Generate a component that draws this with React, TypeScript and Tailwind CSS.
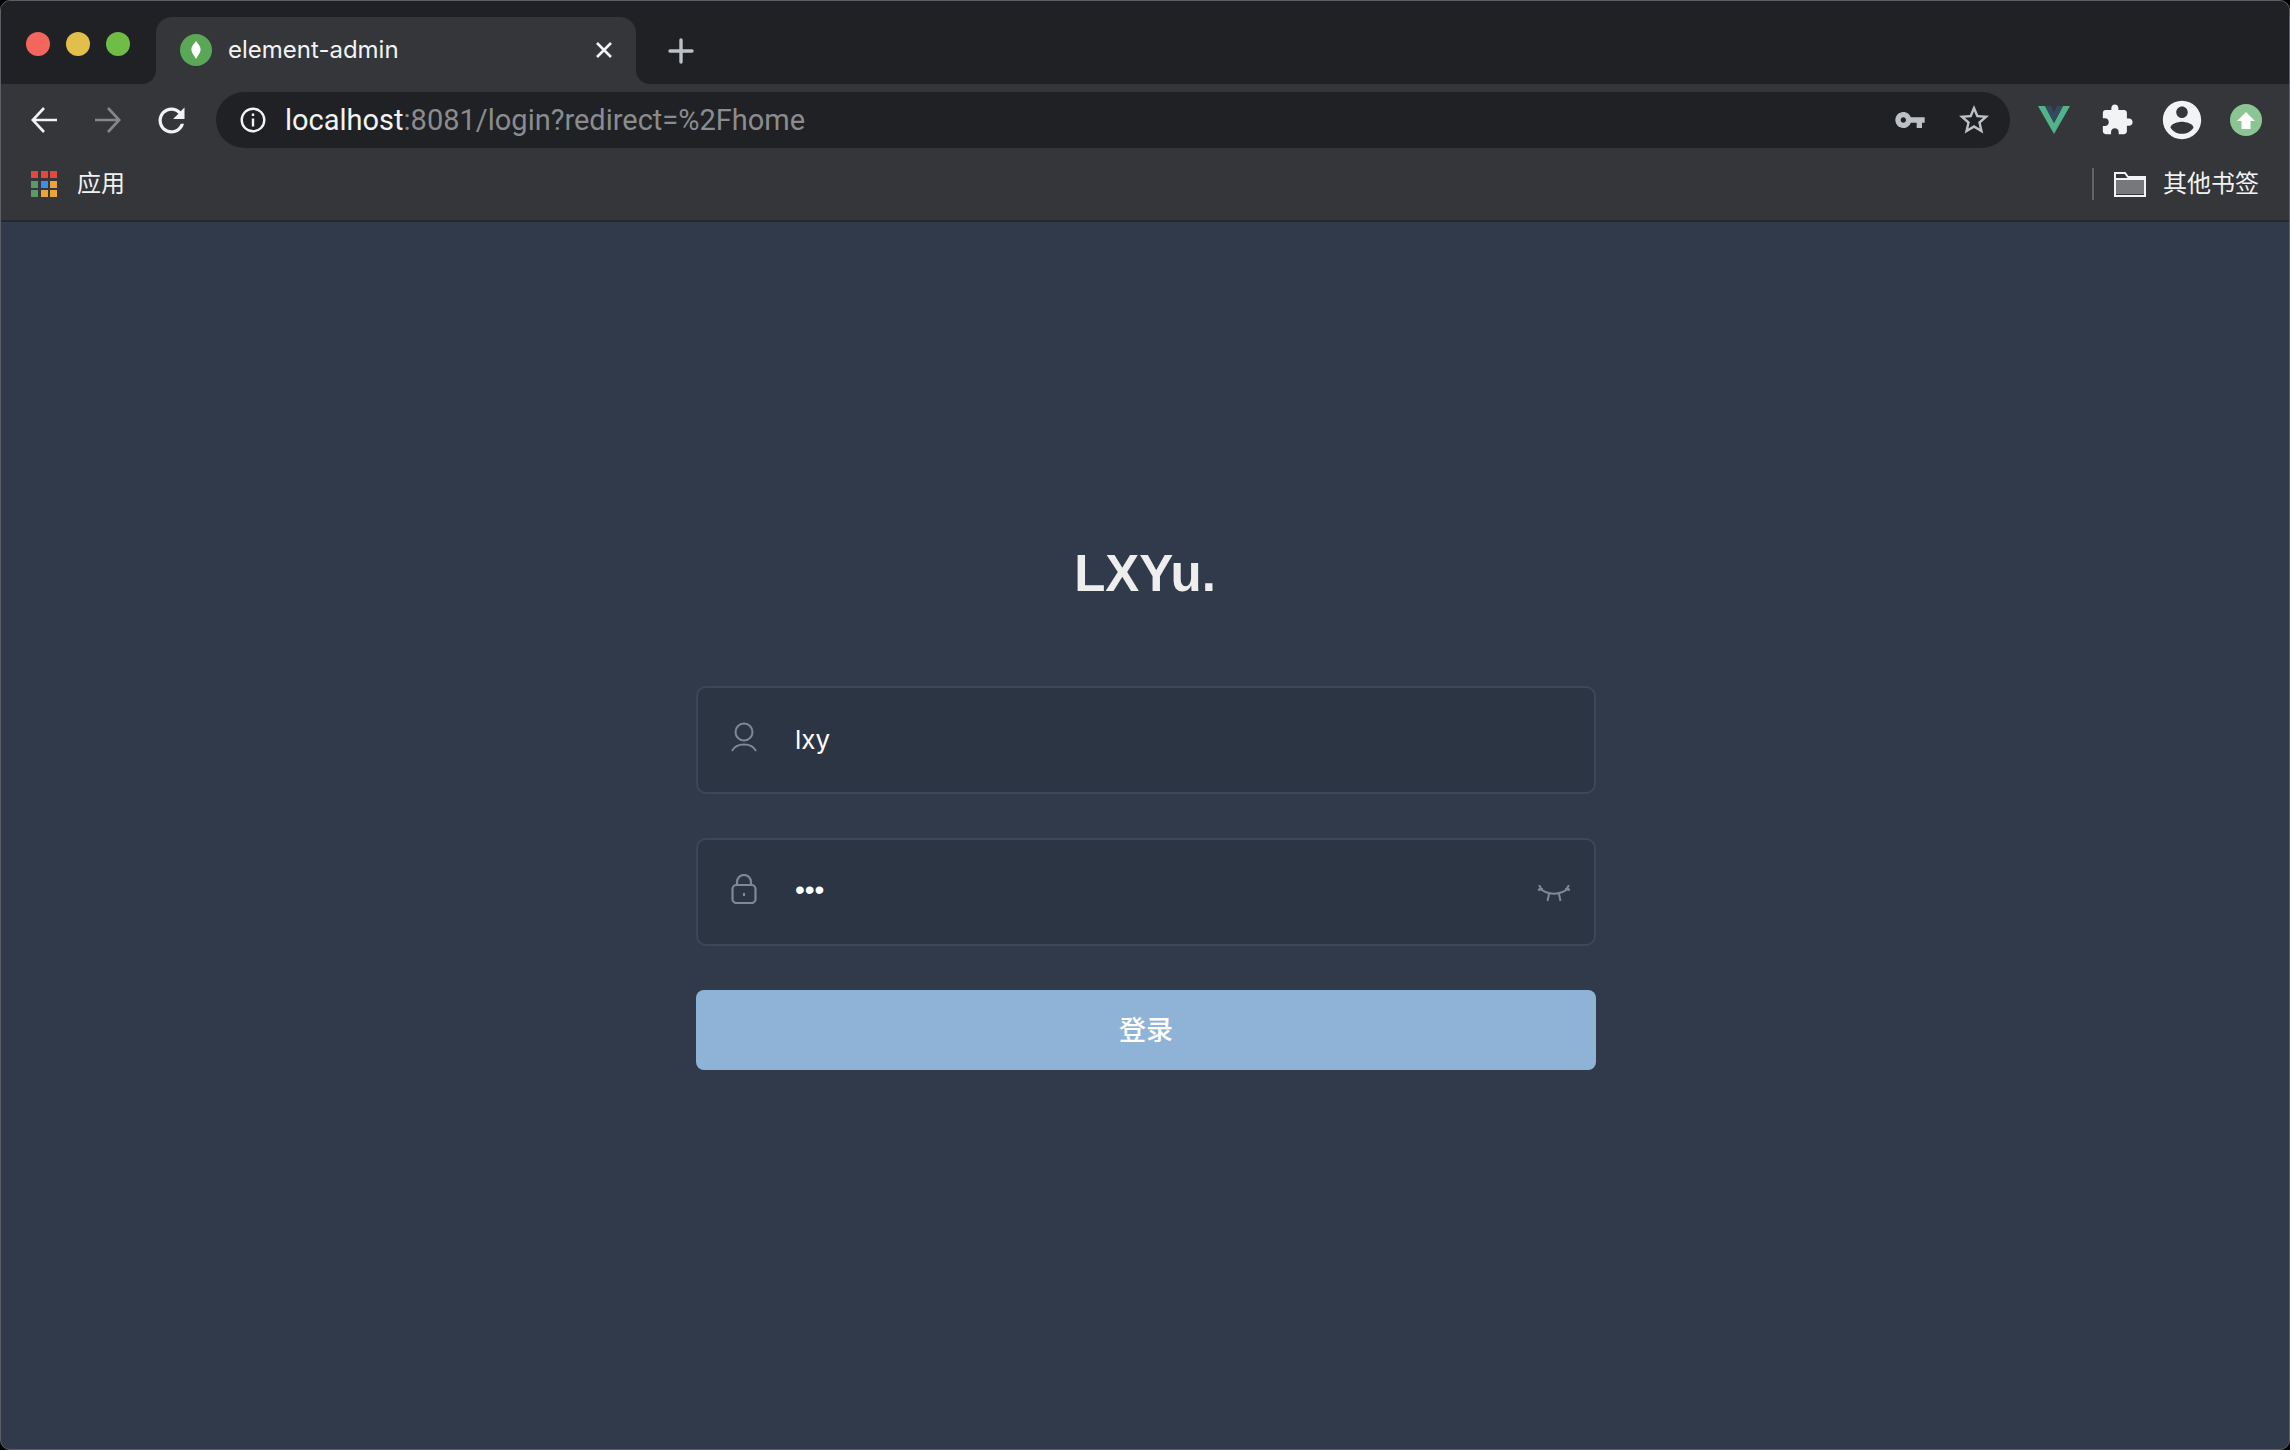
import React from "react";

const sans = "font-['Inter','Noto_Sans_CJK_SC',sans-serif]";

const appColors = [
  "bg-[#e2483d]", "bg-[#e2483d]", "bg-[#e2483d]",
  "bg-[#5a9a68]", "bg-[#3f8cf0]", "bg-[#eaa53a]",
  "bg-[#5a9a68]", "bg-[#eaa53a]", "bg-[#eaa53a]",
];

function TrafficLights() {
  return (
    <div className="flex h-[67px] w-[155px] items-center gap-4 pb-[14px] pl-[25px]">
      <div className="h-6 w-6 rounded-full bg-[#f2665e]" />
      <div className="h-6 w-6 rounded-full bg-[#e2bf4a]" />
      <div className="h-6 w-6 rounded-full bg-[#6fbd45]" />
    </div>
  );
}

function Tab() {
  return (
    <div className="relative flex h-[67px] w-[480px] items-center rounded-t-[16px] bg-[#35363a] pb-[2px] pl-6 pr-[23px]">
      <div className="absolute bottom-0 left-[-14px] h-[14px] w-[14px] bg-[#35363a]">
        <div className="h-full w-full rounded-br-[14px] bg-[#202124]" />
      </div>
      <div className="absolute bottom-0 right-[-14px] h-[14px] w-[14px] bg-[#35363a]">
        <div className="h-full w-full rounded-bl-[14px] bg-[#202124]" />
      </div>
      <div className="flex h-8 w-8 items-center justify-center rounded-full bg-[#5aa857]">
        <svg width="10" height="18" viewBox="0 0 10 18">
          <path d="M5 0C8 4 10 6 9.5 9.5 9 12.500 7 14.500 5 18 3 14.500 1 12.500.5 9.500 0 6 2 4 5 0Z" fill="#fff" />
        </svg>
      </div>
      <span className={`ml-4 flex-1 text-[24px] leading-none text-[#f1f3f4] ${sans}`}>element-admin</span>
      <svg width="18" height="18" viewBox="0 0 18 18" fill="none" stroke="#f1f3f4" strokeWidth="2.6">
        <path d="M2 2l14 14M16 2 2 16" />
      </svg>
    </div>
  );
}

function NavIcons() {
  return (
    <div className="flex h-full w-[215px] items-center pl-[30px]">
      <svg width="26" height="26" viewBox="0 0 26 26" fill="none" stroke="#f1f3f4" strokeWidth="2.6">
        <path d="M26 13H2M13 1 1.800 13 13 25" />
      </svg>
      <svg className="ml-[38px]" width="26" height="26" viewBox="0 0 26 26" fill="none" stroke="#85878a" strokeWidth="2.6">
        <path d="M0 13h24M13 1l11.200 12L13 25" />
      </svg>
      <svg className="ml-[31px]" width="39" height="39" viewBox="0 0 24 24" fill="#f1f3f4">
        <path d="M17.65 6.35C16.2 4.9 14.21 4 12 4c-4.42 0-7.99 3.58-7.99 8s3.57 8 7.99 8c3.73 0 6.84-2.55 7.73-6h-2.08c-.82 2.33-3.04 4-5.65 4-3.31 0-6-2.69-6-6s2.69-6 6-6c1.66 0 3.14.69 4.22 1.78L13 11h7V4l-2.35 2.35z" />
      </svg>
    </div>
  );
}

function AddressBar() {
  return (
    <div className="flex h-14 w-[1794px] items-center rounded-full bg-[#202124] pl-6 pr-[18px]">
      <svg width="26" height="26" viewBox="0 0 26 26" fill="none" stroke="#f1f3f4" strokeWidth="2.4">
        <circle cx="13" cy="13" r="11.3" />
        <path d="M13 11.500v8M13 6.500v2.600" />
      </svg>
      <span className="ml-[19px] flex-1 font-['Roboto',sans-serif] text-[29px] leading-none text-[#8a8c8f]">
        <span className="text-[#f1f3f4]">localhost</span>:8081/login?redirect=%2Fhome
      </span>
      <svg className="mr-[30px]" width="32" height="32" viewBox="0 0 24 24" fill="#bdc1c6">
        <path d="M12.65 10C11.83 7.67 9.61 6 7 6c-3.31 0-6 2.69-6 6s2.69 6 6 6c2.61 0 4.83-1.67 5.65-4H17v4h4v-4h2v-4H12.65zM7 14c-1.1 0-2-.9-2-2s.9-2 2-2 2 .9 2 2-.9 2-2 2z" />
      </svg>
      <svg width="36" height="36" viewBox="0 0 24 24" fill="#bdc1c6">
        <path d="M22 9.24l-7.19-.62L12 2 9.19 8.63 2 9.24l5.46 4.73L5.82 21 12 17.27 18.18 21l-1.63-7.03L22 9.24zM12 15.4l-3.76 2.27 1-4.28-3.32-2.88 4.38-.38L12 6.1l1.71 4.04 4.38.38-3.32 2.88 1 4.28L12 15.4z" />
      </svg>
    </div>
  );
}

function ExtensionIcons() {
  return (
    <div className="flex items-center">
      <svg className="ml-7" width="32" height="28" viewBox="0 0 32 28">
        <path d="M0 0h7l9 17L25 0h7L16 28Z" fill="#4fb48a" />
        <path d="M7 0h6l3 6 3-6h6l-9 17Z" fill="#34495e" />
      </svg>
      <svg className="ml-[30px]" width="34" height="34" viewBox="0 0 24 24" fill="#f1f3f4">
        <path d="M20.5 11H19V7c0-1.1-.9-2-2-2h-4V3.500C13 2.120 11.880 1 10.500 1S8 2.120 8 3.500V5H4c-1.100 0-1.990.9-1.990 2v3.800H3.500c1.490 0 2.700 1.210 2.700 2.700s-1.210 2.700-2.700 2.700H2V20c0 1.100.9 2 2 2h3.800v-1.500c0-1.490 1.210-2.700 2.700-2.700 1.490 0 2.700 1.210 2.700 2.700V22H17c1.100 0 2-.9 2-2v-4h1.500c1.380 0 2.500-1.120 2.500-2.500S21.880 11 20.500 11z" />
      </svg>
      <svg className="ml-[25px]" width="46" height="46" viewBox="0 0 24 24" fill="#f1f3f4">
        <path d="M12 2C6.480 2 2 6.480 2 12s4.480 10 10 10 10-4.480 10-10S17.520 2 12 2zm0 3c1.660 0 3 1.340 3 3s-1.340 3-3 3-3-1.340-3-3 1.340-3 3-3zm0 14.200c-2.500 0-4.710-1.280-6-3.220.03-1.990 4-3.080 6-3.080 1.990 0 5.970 1.090 6 3.080-1.290 1.940-3.500 3.220-6 3.220z" />
      </svg>
      <div className="ml-[25px] flex h-8 w-8 items-center justify-center rounded-full bg-[#8cc594]">
        <svg width="18" height="17" viewBox="0 0 18 17" fill="#fff">
          <path d="M9 0l9 9h-4.500v8h-9V9H0Z" />
        </svg>
      </div>
    </div>
  );
}

function Bookmarks() {
  return (
    <div className={`flex h-[64px] items-center justify-between pb-[8px] pl-[30px] pr-[30px] text-[24px] text-[#f1f3f4] ${sans}`}>
      <div className="flex items-center">
        <div className="grid w-[26px] grid-cols-3 gap-[2.5px]">
          {appColors.map((color, i) => (
            <div key={i} className={`h-[7px] w-[7px] ${color}`} />
          ))}
        </div>
        <span className="ml-5 leading-none">应用</span>
      </div>
      <div className="flex items-center">
        <div className="mr-[20px] h-8 w-[2px] bg-[#5f6368]" />
        <svg width="32" height="26" viewBox="0 0 32 26" fill="none">
          <path d="M2 9h28v14H2Z" fill="#77787b" />
          <path d="M1 24V2h10l3 4h17v19H1ZM1 8h30" stroke="#f1f3f4" strokeWidth="2" />
        </svg>
        <span className="ml-[17px] leading-none">其他书签</span>
      </div>
    </div>
  );
}

function Field({ icon, children, right }: { icon: React.ReactNode; children: React.ReactNode; right?: React.ReactNode }) {
  return (
    <div className="flex h-[108px] items-center rounded-[10px] border-2 border-[#3d4757] bg-[#2c3543] pb-[1px] pl-[33px] pr-[23px]">
      <div className="flex w-[64px] items-center pb-[5px]">{icon}</div>
      <div className={`flex-1 leading-none text-white ${sans}`}>{children}</div>
      {right}
    </div>
  );
}

export default function App() {
  return (
    <div className="bg-black">
      <div className="flex h-[1450px] w-[2290px] flex-col overflow-hidden rounded-[10px] border border-[#5b5f66] bg-[#303a4b]">
        <div className="flex h-[83px] shrink-0 items-end bg-[#202124]">
          <TrafficLights />
          <Tab />
          <svg className="mb-[20px] ml-[32px]" width="26" height="26" viewBox="0 0 26 26" fill="none" stroke="#bdc1c6" strokeWidth="3.4" strokeLinecap="round">
            <path d="M13 2v22M2 13h22" />
          </svg>
        </div>
        <div className="shrink-0 border-b-2 border-b-[#27282b] bg-[#35363a]">
          <div className="flex h-[72px] items-center">
            <NavIcons />
            <AddressBar />
            <ExtensionIcons />
          </div>
          <Bookmarks />
        </div>
        <div className="flex flex-1 justify-center pl-[2px] pt-[322px]">
          <div className="flex w-[900px] flex-col">
            <h1 className="pr-[2px] text-center font-['Liberation_Sans',Arial,sans-serif] text-[51px] font-bold leading-[60px] text-[#eeeeee]">LXYu.</h1>
            <div className="mt-[82px] flex flex-col gap-[44px]">
              <Field
                icon={
                  <svg width="26" height="30" viewBox="0 0 26 30" fill="none" stroke="#7d8a96" strokeWidth="2">
                    <circle cx="13" cy="10" r="8.500" />
                    <path d="M1 29c2.500-5 7-6.500 12-6.500S22.500 24 25 29" />
                  </svg>
                }
              >
                <span className="text-[26px]">lxy</span>
              </Field>
              <Field
                icon={
                  <svg width="26" height="30" viewBox="0 0 26 30" fill="none" stroke="#7d8a96" strokeWidth="2.2">
                    <rect x="1.500" y="11" width="23" height="18" rx="4" />
                    <path d="M6 11V8a7 7 0 0 1 14 0v3M13 19v3" />
                  </svg>
                }
                right={
                  <svg className="mt-[4px]" width="34" height="17" viewBox="0 0 34 17" fill="none" stroke="#7d8a96" strokeWidth="2">
                    <path d="M2 3c9 7.500 21 7.500 30 0M1 5l5-1M2 0l3 5M33 5l-5-1M32 0l-3 5M12 9l-1.500 7M22 9l1.500 7" />
                  </svg>
                }
              >
                <span className="block pb-1 font-['Liberation_Sans',sans-serif] text-[28px]">•••</span>
              </Field>
              <button className={`h-20 rounded-[8px] bg-[#8fb2d7] pt-[2px] text-[27px] font-medium text-white ${sans}`}>登录</button>
            </div>
          </div>
        </div>
      </div>
    </div>
  );
}
